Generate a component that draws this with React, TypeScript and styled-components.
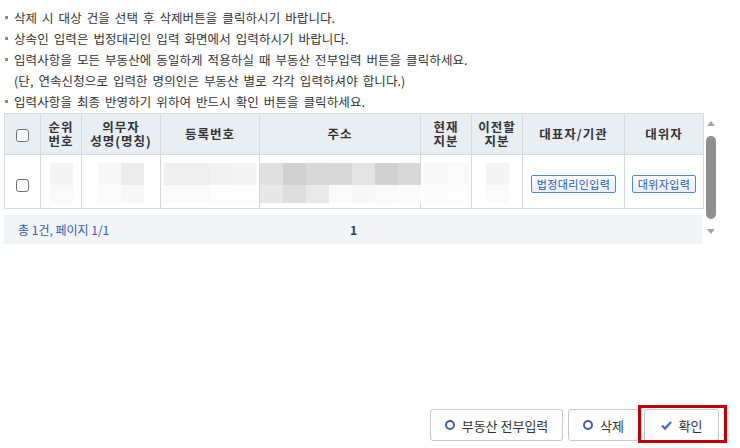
import styled, { createGlobalStyle } from "styled-components";

const GlobalStyle = createGlobalStyle`
  html, body {
    margin: 0;
    padding: 0;
    background: #ffffff;
  }
  body {
    font-family: "Noto Sans CJK KR", "Noto Sans", sans-serif;
    color: #333333;
  }
`;

const Page = styled.div`
  width: 740px;
  height: 448px;
  display: flex;
  flex-direction: column;
  box-sizing: border-box;
`;

const NoticeList = styled.ul`
  list-style: none;
  margin: 0;
  padding: 7px 0 0 4px;
  font-size: 12.5px;
  line-height: 21px;
  letter-spacing: 0.1px;
  word-spacing: 2px;
`;

const NoticeItem = styled.li<{ $sub?: boolean }>`
  position: relative;
  padding-left: 10px;
  white-space: nowrap;
  &::before {
    content: "";
    position: absolute;
    left: 1px;
    top: 9px;
    width: 3px;
    height: 3px;
    background: ${(p) => (p.$sub ? "transparent" : "#8a8a8a")};
  }
`;

const GridArea = styled.div`
  display: flex;
  margin: 1px 0 0 4px;
  width: 715px;
`;

const GridBody = styled.div`
  width: 699px;
`;

const Table = styled.table`
  width: 699px;
  border-collapse: collapse;
  table-layout: fixed;
  border: 1px solid #d5d9de;
`;

const HeadCell = styled.th`
  height: 40px;
  padding: 0;
  background: #e9eef3;
  border: 1px solid #d5d9de;
  font-size: 12.5px;
  font-weight: bold;
  line-height: 14px;
  letter-spacing: 1px;
  color: #333333;
  text-align: center;
  vertical-align: middle;
`;

const Cell = styled.td`
  height: 54px;
  padding: 3px 0 0;
  border: 1px solid #d5d9de;
  text-align: center;
  vertical-align: middle;
  box-sizing: border-box;
`;

const Check = styled.span`
  display: inline-block;
  width: 11px;
  height: 11px;
  border: 1.5px solid #707070;
  border-radius: 3px;
  background: #ffffff;
  vertical-align: middle;
`;

const Mosaic = styled.div<{ $cols: number }>`
  display: inline-grid;
  grid-template-columns: repeat(${(p) => p.$cols}, 23px);
  grid-template-rows: 22px 18px;
  vertical-align: middle;
`;

const Tile = styled.span<{ $shade: string }>`
  background: ${(p) => p.$shade};
`;

const CellButton = styled.button`
  height: 18px;
  padding: 0 5px;
  border: 1px solid #5a86c4;
  border-radius: 2px;
  background: linear-gradient(#ffffff, #e6eef9);
  color: #2a58a5;
  font-family: "Noto Sans CJK KR", "Noto Sans", sans-serif;
  font-size: 11px;
  line-height: 16px;
  letter-spacing: 0.4px;
  cursor: pointer;
  margin-bottom: 3px;
`;

const Pager = styled.div`
  display: grid;
  grid-template-columns: 1fr auto 1fr;
  align-items: center;
  height: 29px;
  margin-top: 6px;
  background: #f2f4f7;
  font-size: 12px;
  color: #2f5fa8;
`;

const PageSummary = styled.span`
  padding-left: 14px;
`;

const PageNumber = styled.span`
  color: #1f3f7a;
  font-weight: bold;
`;

const Scrollbar = styled.div`
  width: 16px;
  height: 131px;
  display: flex;
  flex-direction: column;
  align-items: center;
  padding-top: 8px;
  box-sizing: border-box;
`;

const Arrow = styled.span<{ $down?: boolean }>`
  width: 0;
  height: 0;
  border-left: 4.5px solid transparent;
  border-right: 4.5px solid transparent;
  ${(p) =>
    p.$down
      ? "border-top: 5px solid #a3a3a3;"
      : "border-bottom: 5px solid #a3a3a3;"}
`;

const Thumb = styled.span`
  width: 10px;
  height: 83px;
  margin: 10px 0;
  border-radius: 5px;
  background: #8f8f8f;
`;

const ActionBar = styled.div`
  margin-top: auto;
  display: flex;
  justify-content: flex-end;
  gap: 5px;
  padding: 0 21px 7px 0;
`;

const ActionButton = styled.button<{ $width: number; $marked?: boolean }>`
  position: relative;
  width: ${(p) => p.$width}px;
  height: 32px;
  display: inline-flex;
  align-items: center;
  justify-content: center;
  gap: 7px;
  padding: 0;
  border: 1px solid #c8c8c8;
  border-radius: 3px;
  background: #ffffff;
  color: #333333;
  font-family: "Noto Sans CJK KR", "Noto Sans", sans-serif;
  font-size: 13px;
  cursor: pointer;
  ${(p) =>
    p.$marked
      ? `&::after {
          content: "";
          position: absolute;
          left: -7px;
          right: -9px;
          top: -5px;
          bottom: -3px;
          border: 3px solid #c00000;
        }`
      : ""}
`;

const Ring = styled.span`
  width: 6px;
  height: 6px;
  border: 2.5px solid #3e5fa6;
  border-radius: 50%;
`;

const columns = [36, 41, 79, 99, 161, 51, 51, 102, 79];

const mosaics: { cols: number; top: string[]; bottom: string[] }[] = [
  { cols: 1, top: ["#f4f4f4"], bottom: ["#f9f9f9"] },
  { cols: 2, top: ["#f7f7f7", "#ececec"], bottom: ["#fbfbfb", "#f7f7f7"] },
  {
    cols: 4,
    top: ["#efefef", "#efefef", "#f2f2f2", "#f5f5f5"],
    bottom: ["#fafafa", "#fafafa", "#fdfdfd", "#fdfdfd"],
  },
  {
    cols: 7,
    top: ["#e0e0e0", "#d0d0d0", "#d8d8d8", "#d9d9d9", "#e3e3e3", "#d0d0d0", "#d8d8d8"],
    bottom: ["#e8e8e8", "#dddddd", "#e9e9e9", "#fafafa", "#f7f7f7", "#f9f9f9", "#fbfbfb"],
  },
  { cols: 2, top: ["#f8f8f8", "#f9f9f9"], bottom: ["#fcfcfc", "#fdfdfd"] },
  { cols: 1, top: ["#f4f4f4"], bottom: ["#fafafa"] },
];

function CheckIcon() {
  return (
    <svg width="11" height="9" viewBox="0 0 11 9">
      <polyline
        points="1,4.5 4,7.5 10,1"
        fill="none"
        stroke="#4a6db0"
        strokeWidth="2.4"
      />
    </svg>
  );
}

export default function App() {
  return (
    <Page>
      <GlobalStyle />
      <NoticeList>
        <NoticeItem>삭제 시 대상 건을 선택 후 삭제버튼을 클릭하시기 바랍니다.</NoticeItem>
        <NoticeItem>상속인 입력은 법정대리인 입력 화면에서 입력하시기 바랍니다.</NoticeItem>
        <NoticeItem>
          입력사항을 모든 부동산에 동일하게 적용하실 때 부동산 전부입력 버튼을 클릭하세요.
        </NoticeItem>
        <NoticeItem $sub>(단, 연속신청으로 입력한 명의인은 부동산 별로 각각 입력하셔야 합니다.)</NoticeItem>
        <NoticeItem>입력사항을 최종 반영하기 위하여 반드시 확인 버튼을 클릭하세요.</NoticeItem>
      </NoticeList>

      <GridArea>
        <GridBody>
          <Table>
            <colgroup>
              {columns.map((w, i) => (
                <col key={i} style={{ width: w }} />
              ))}
            </colgroup>
            <thead>
              <tr>
                <HeadCell>
                  <Check />
                </HeadCell>
                <HeadCell>
                  순위
                  <br />
                  번호
                </HeadCell>
                <HeadCell>
                  의무자
                  <br />
                  성명(명칭)
                </HeadCell>
                <HeadCell>등록번호</HeadCell>
                <HeadCell>주소</HeadCell>
                <HeadCell>
                  현재
                  <br />
                  지분
                </HeadCell>
                <HeadCell>
                  이전할
                  <br />
                  지분
                </HeadCell>
                <HeadCell>대표자/기관</HeadCell>
                <HeadCell>대위자</HeadCell>
              </tr>
            </thead>
            <tbody>
              <tr>
                <Cell>
                  <Check />
                </Cell>
                {mosaics.map((m, i) => (
                  <Cell key={i}>
                    <Mosaic $cols={m.cols}>
                      {m.top.map((c, j) => (
                        <Tile key={`t${j}`} $shade={c} />
                      ))}
                      {m.bottom.map((c, j) => (
                        <Tile key={`b${j}`} $shade={c} />
                      ))}
                    </Mosaic>
                  </Cell>
                ))}
                <Cell>
                  <CellButton>법정대리인입력</CellButton>
                </Cell>
                <Cell>
                  <CellButton>대위자입력</CellButton>
                </Cell>
              </tr>
            </tbody>
          </Table>
          <Pager>
            <PageSummary>총 1건, 페이지 1/1</PageSummary>
            <PageNumber>1</PageNumber>
            <span />
          </Pager>
        </GridBody>
        <Scrollbar>
          <Arrow />
          <Thumb />
          <Arrow $down />
        </Scrollbar>
      </GridArea>

      <ActionBar>
        <ActionButton $width={133}>
          <Ring />
          부동산 전부입력
        </ActionButton>
        <ActionButton $width={71}>
          <Ring />
          삭제
        </ActionButton>
        <ActionButton $width={75} $marked>
          <CheckIcon />
          확인
        </ActionButton>
      </ActionBar>
    </Page>
  );
}
